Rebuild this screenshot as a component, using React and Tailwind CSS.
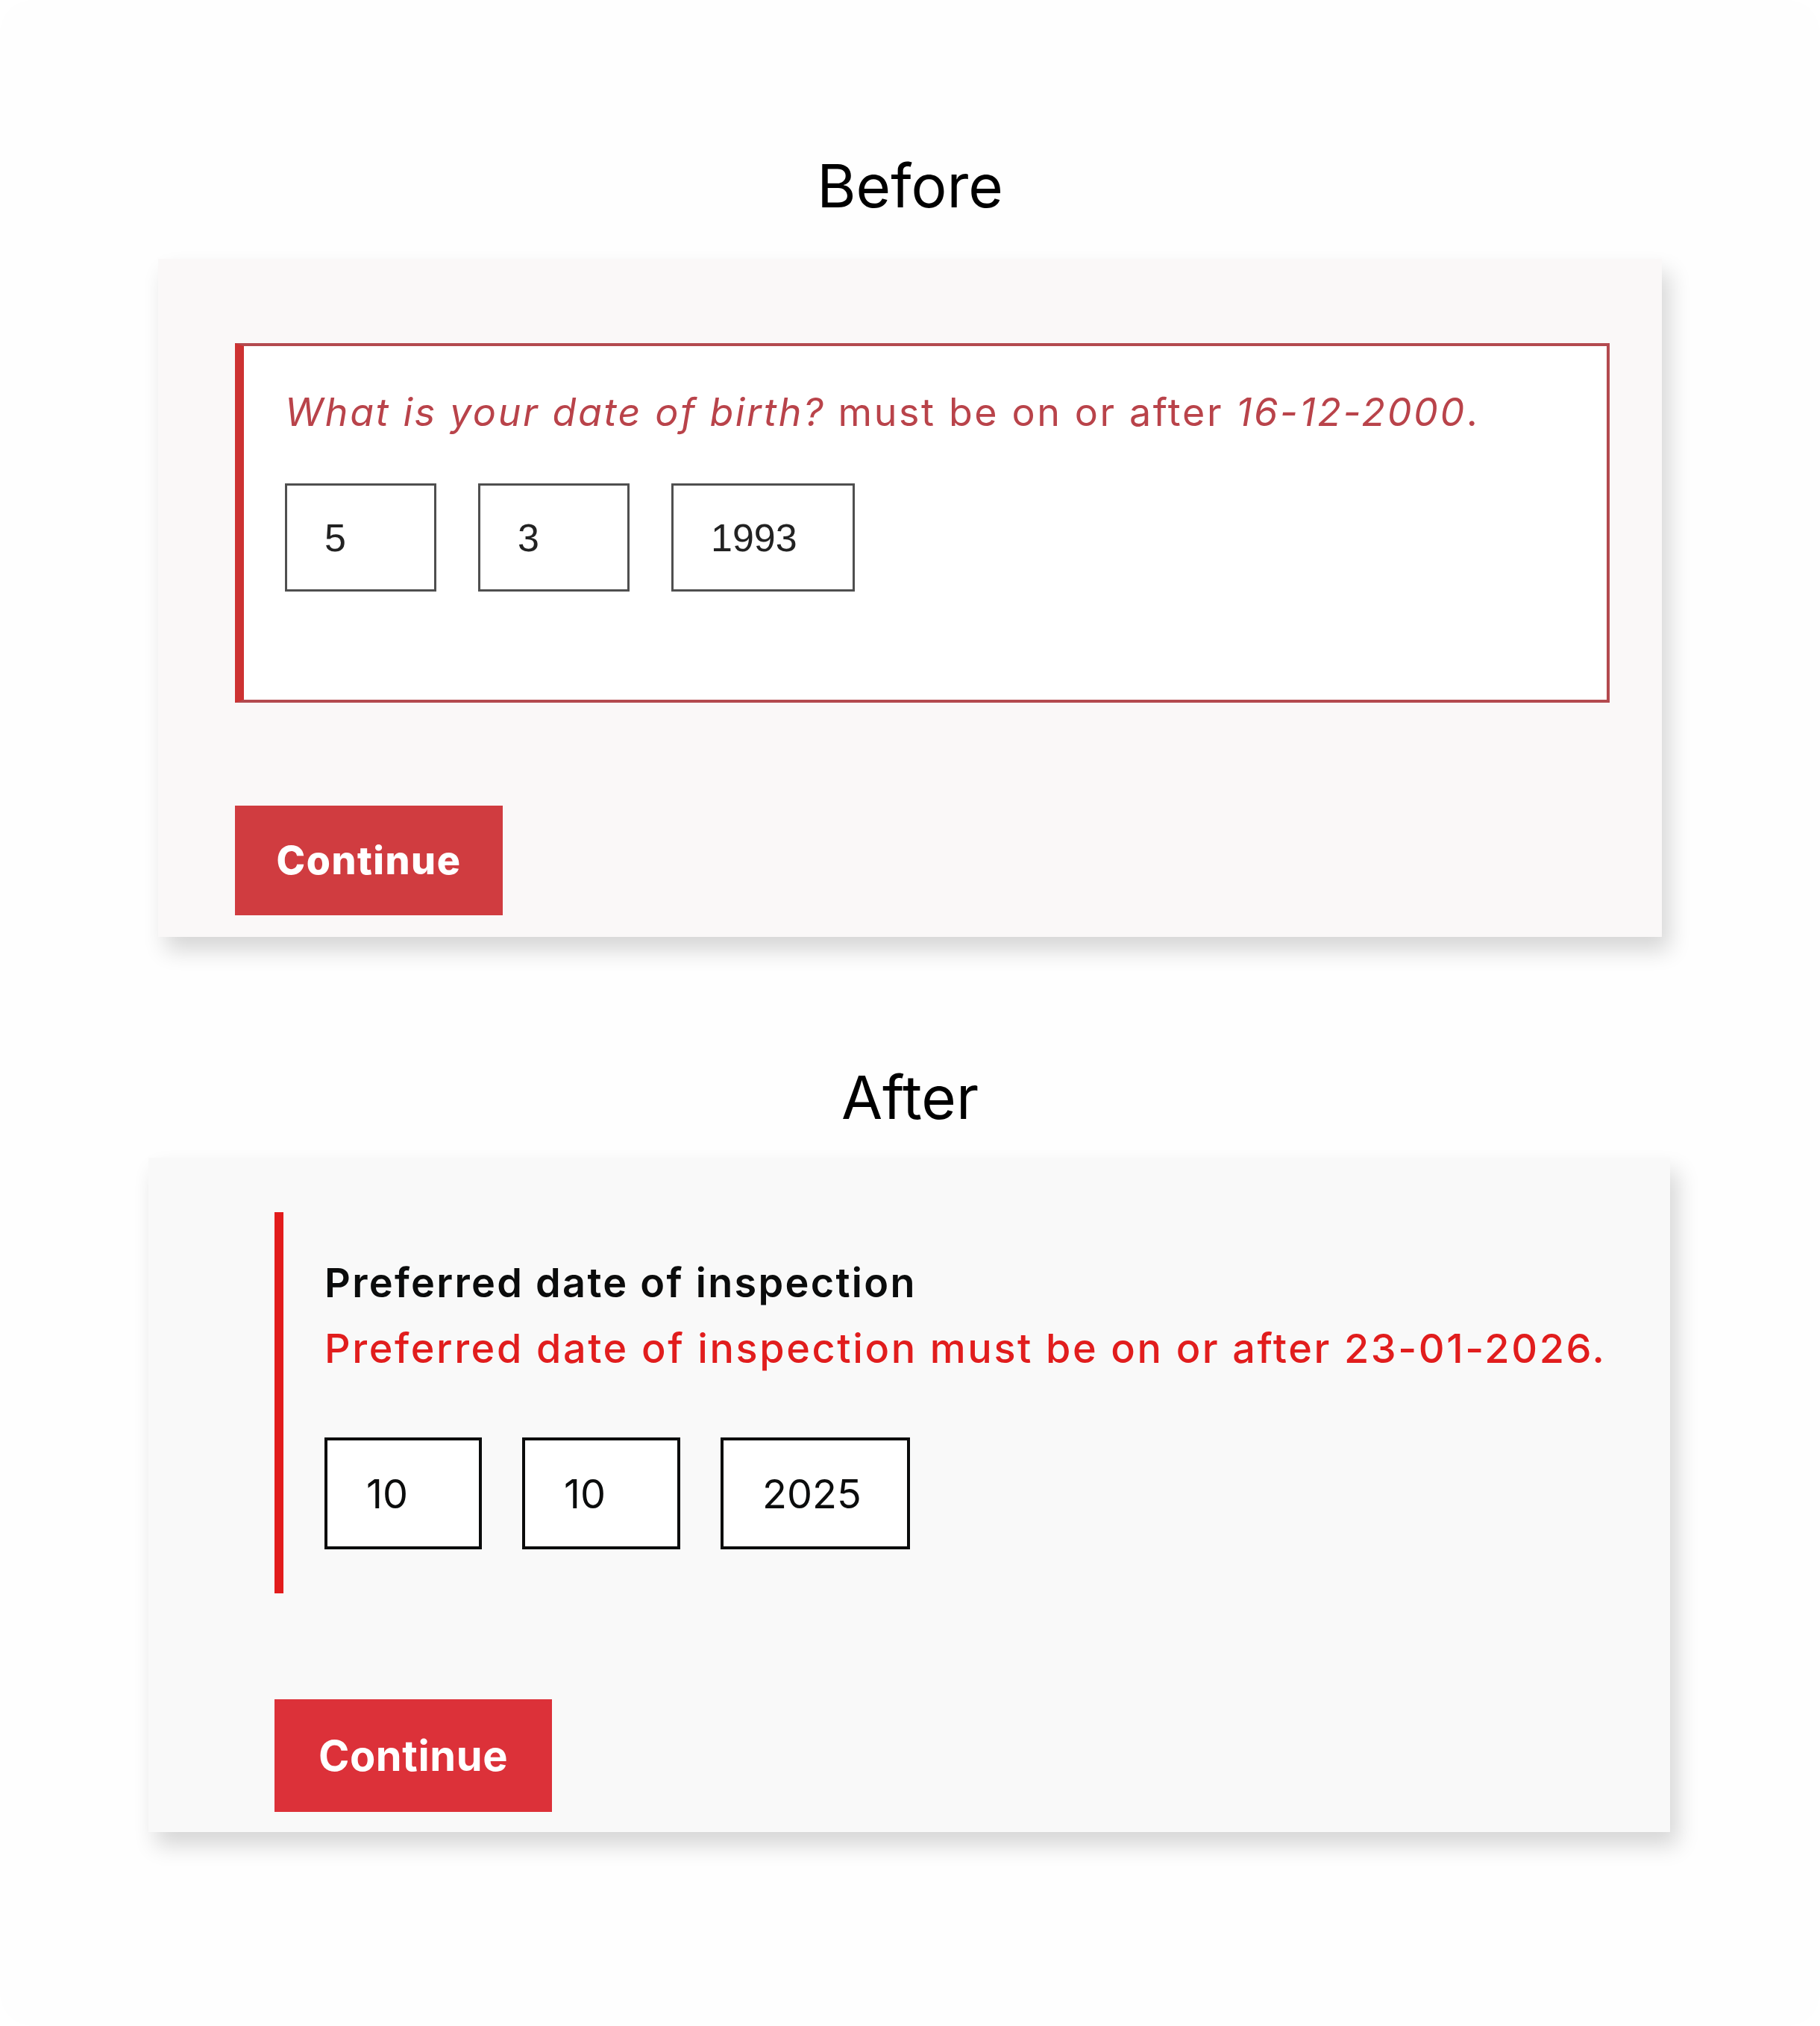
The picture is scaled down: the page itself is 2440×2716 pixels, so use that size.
import React from 'react'

const beforeFields = [
    { id: 'day', value: '5', width: 'w-[203px]' },
    { id: 'month', value: '3', width: 'w-[203px]' },
    { id: 'year', value: '1993', width: 'w-[246px]' },
]

const afterFields = [
    { id: 'day', value: '10', width: 'w-[211px]' },
    { id: 'month', value: '10', width: 'w-[212px]' },
    { id: 'year', value: '2025', width: 'w-[254px]' },
]

function BeforeCard() {
    return (
        <div className="ml-[212px] mt-[58px] w-[2016px] h-[909px] bg-[#faf8f8] pt-[113px] pl-[103px] pr-[70px] shadow-[10px_18px_28px_rgba(0,0,0,0.16)]">
            <div className="h-[482px] bg-white border-[4px] border-[#b34a4f] border-l-[12px] border-l-[#cd3232] pl-[55px] pt-[58px]">
                <p className="text-[52px] leading-[62px] text-[#b9434a] font-['Inter',sans-serif] tracking-[2.6px]">
                    <span className="italic">What is your date of birth?</span> must be on or after{' '}
                    <span className="italic">16-12-2000</span>.
                </p>
                <div className="mt-[64px] flex gap-[56px]">
                    {beforeFields.map((f) => (
                        <input
                            key={f.id}
                            readOnly
                            value={f.value}
                            className={`${f.width} h-[145px] border-[3px] border-[#4f4f4f] bg-white pl-[50px] text-[52px] text-[#222] font-['Liberation_Sans',Arial,sans-serif] outline-none`}
                        />
                    ))}
                </div>
            </div>
            <button className="mt-[138px] w-[359px] h-[147px] bg-[#d03c40] text-white text-[52px] font-extrabold tracking-[1.5px] font-['Inter',sans-serif]">
                Continue
            </button>
        </div>
    )
}

function AfterCard() {
    return (
        <div className="ml-[199px] mt-[41px] w-[2040px] h-[904px] bg-[#f9f9f9] pt-[73px] pl-[169px] shadow-[10px_18px_28px_rgba(0,0,0,0.16)]">
            <div className="h-[511px] border-l-[12px] border-[#e21c1c] pl-[55px] pt-[63px] font-['Inter',sans-serif]">
                <p className="text-[54px] leading-[64px] font-semibold tracking-[2.3px] text-[#0b0c0c]">Preferred date of inspection</p>
                <p className="mt-[24px] text-[54px] leading-[64px] font-medium tracking-[2.6px] text-[#e11d1d]">
                    Preferred date of inspection must be on or after 23-01-2026.
                </p>
                <div className="mt-[87px] flex gap-[54px]">
                    {afterFields.map((f) => (
                        <input
                            key={f.id}
                            readOnly
                            value={f.value}
                            className={`${f.width} h-[150px] border-[4px] border-[#0b0c0c] bg-white pl-[52px] text-[54px] text-[#0b0c0c] outline-none`}
                        />
                    ))}
                </div>
            </div>
            <button className="mt-[142px] w-[372px] h-[151px] bg-[#dc3139] text-white text-[56px] font-bold tracking-[0.6px] font-['Inter',sans-serif]">
                Continue
            </button>
        </div>
    )
}

export default function App() {
    return (
        <div className="w-[2440px] h-[2716px] bg-white">
            <div className="w-full h-full rounded-[44px] bg-[#fefefe] overflow-hidden flex flex-col font-['Inter',sans-serif]">
                <h2 className="mt-[209px] h-[80px] text-[80px] leading-[80px] text-center text-black">Before</h2>
                <BeforeCard />
                <h2 className="mt-[175px] h-[80px] text-[80px] leading-[80px] text-center text-black">After</h2>
                <AfterCard />
            </div>
        </div>
    )
}
